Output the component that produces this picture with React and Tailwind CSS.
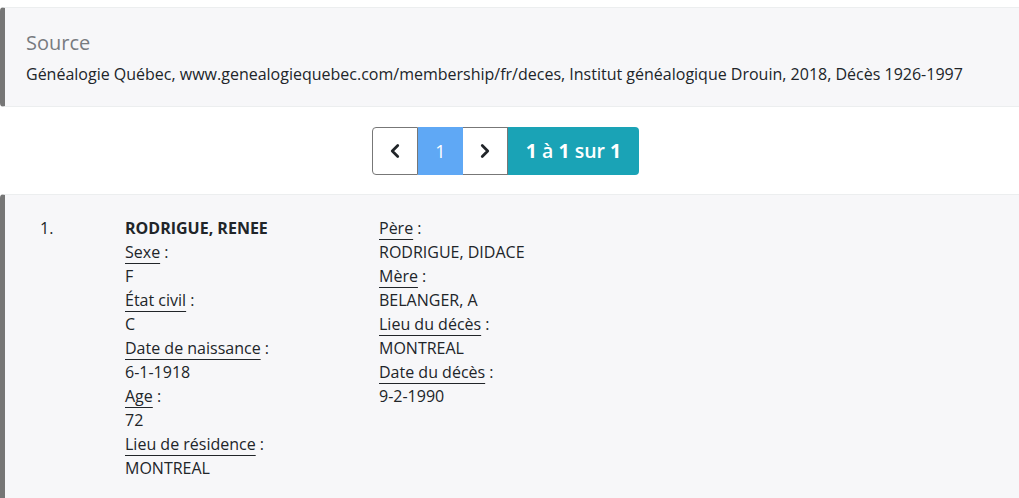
import { ChevronLeft, ChevronRight } from "lucide-react";

const left = [
  { label: "Sexe", value: "F" },
  { label: "État civil", value: "C" },
  { label: "Date de naissance", value: "6-1-1918" },
  { label: "Age", value: "72" },
  { label: "Lieu de résidence", value: "MONTREAL" },
];

const right = [
  { label: "Père", value: "RODRIGUE, DIDACE" },
  { label: "Mère", value: "BELANGER, A" },
  { label: "Lieu du décès", value: "MONTREAL" },
  { label: "Date du décès", value: "9-2-1990" },
];

function Field({ label, value }) {
  return (
    <>
      <div>
        <span className="underline decoration-1 underline-offset-[5px]">{label}</span> :
      </div>
      <div>{value}</div>
    </>
  );
}

export default function App() {
  return (
    <div
      className="min-h-screen bg-white text-[#212529] text-[16px] leading-[24px] overflow-hidden"
      style={{ fontFamily: '"Open Sans", "Noto Sans", sans-serif' }}
    >
      <div className="pt-[7px]">
        {/* Source */}
        <section className="bg-[#f7f7f9] border-y border-[#eceeef] border-l-[5px] border-l-[#767676] rounded-l-[4px] pl-[21px] pt-[23px] pb-[20px]">
          <h4 className="text-[20px] leading-[24px] text-[#777b80] mb-[7px]">Source</h4>
          <p className="text-[16px]">
            Généalogie Québec, www.genealogiequebec.com/membership/fr/deces, Institut généalogique Drouin, 2018, Décès 1926-1997
          </p>
        </section>

        {/* Pagination */}
        <div className="flex justify-center mt-[20px] mb-[19px] pr-[8px]">
          <div className="flex h-[48px] text-[18px]">
            <button className="w-[46px] flex items-center justify-center bg-white border border-[#777] rounded-l-[4px] text-[#212529]">
              <ChevronLeft size={22} strokeWidth={3} />
            </button>
            <div className="w-[45px] flex items-center justify-center bg-[#5fa8f5] text-white">1</div>
            <button className="w-[45px] flex items-center justify-center bg-white border border-l-0 border-[#777] text-[#212529]">
              <ChevronRight size={22} strokeWidth={3} />
            </button>
            <div className="w-[131px] flex items-center justify-center bg-[#1aa3b6] text-white rounded-r-[4px] text-[19.5px] font-semibold">
              <span>
                <b className="font-bold">1</b> à <b className="font-bold">1</b> sur <b className="font-bold">1</b>
              </span>
            </div>
          </div>
        </div>

        {/* Result */}
        <section className="bg-[#f7f7f9] border-t border-[#eceeef] border-l-[5px] border-l-[#767676] rounded-tl-[4px] pt-[21px] pb-[20px] flex">
          <div className="w-[120px] pl-[35px]">1.</div>
          <div className="w-[254px]">
            <div className="font-bold">RODRIGUE, RENEE</div>
            {left.map((f) => (
              <Field key={f.label} {...f} />
            ))}
          </div>
          <div>
            {right.map((f) => (
              <Field key={f.label} {...f} />
            ))}
          </div>
        </section>
      </div>
    </div>
  );
}
